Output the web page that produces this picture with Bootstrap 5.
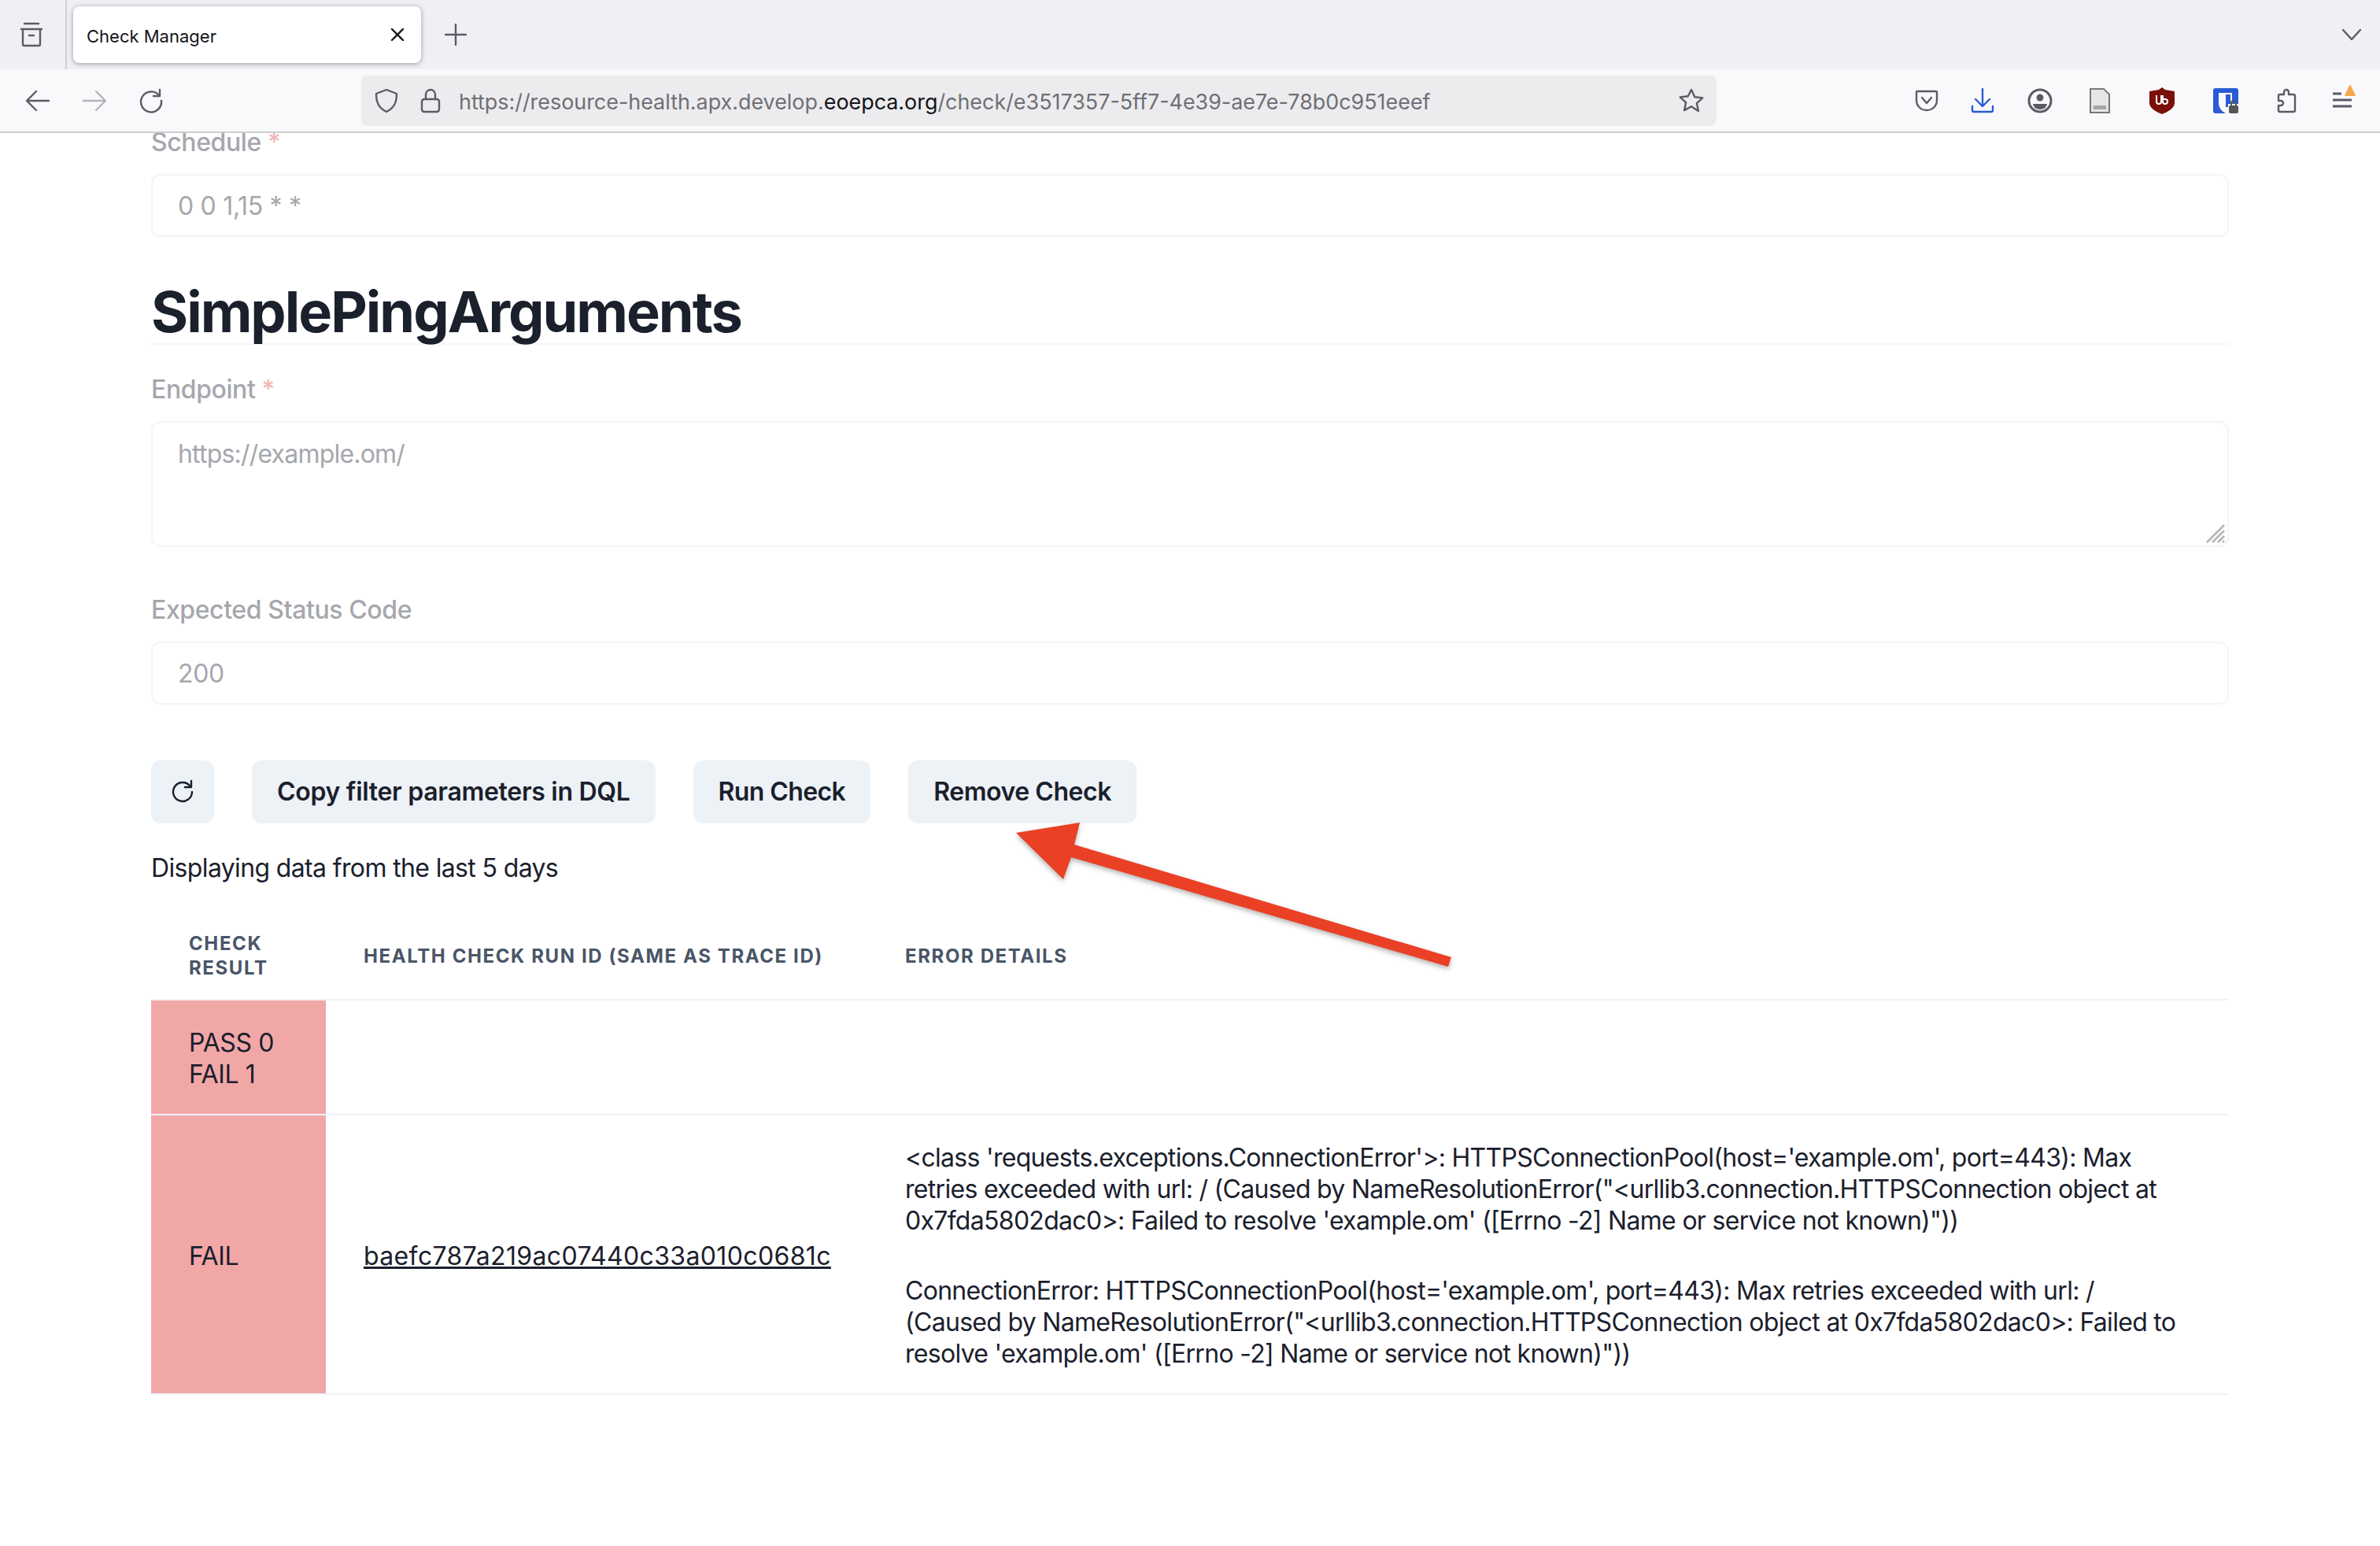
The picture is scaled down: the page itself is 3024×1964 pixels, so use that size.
<!DOCTYPE html>
<html lang="en">
<head>
  <meta charset="UTF-8">
  <title>Check Manager</title>
  <link href="https://cdn.jsdelivr.net/npm/bootstrap@5.3.0/dist/css/bootstrap.min.css" rel="stylesheet">
  <style>
    html, body { height: 100%; }
    body { font-family: Inter, "Liberation Sans", sans-serif; color: #1a202c; background: #fff; overflow: hidden; font-size: 32px; }
    svg { display: block; flex: none; }
    .ic { fill: none; stroke: #5b5b66; stroke-width: 2.4; stroke-linecap: round; stroke-linejoin: round; }

    /* browser chrome */
    .tab-strip { height: 88px; background: #f0f0f4; }
    .side-btn { width: 85px; padding-left: 24px; border-right: 2px solid #cfcfd6; }
    .tab-item { width: 442px; height: 72px; margin-left: 8px; padding: 0 20px 0 17px; background: #fff; border-radius: 8px; box-shadow: 0 1px 6px rgba(0,0,0,.35); font-size: 22px; color: #15141a; }
    .tab-item span { padding-top: 4px; }
    .new-tab { margin-left: 30px; }
    .all-tabs { margin-right: 24px; }
    .tool-strip { height: 81px; background: #f9f9fb; border-bottom: 2px solid #cfcfd3; padding-left: 32px; }
    .nav-gap { margin-left: 40px; }
    .url-bar { width: 1722px; height: 64px; margin-left: 251px; padding: 0 16px; background: #ececee; border-radius: 8px; }
    .url-text { margin-left: 20px; padding-top: 3px; font-size: 26.9px; color: #6f6f76; white-space: nowrap; }
    .url-text b { font-weight: 400; color: #15141a; }
    .url-star { margin-left: auto; }
    .tools { margin-left: 251px; }
    .tools svg:nth-child(2) { margin-left: 39px; }
    .tools svg:nth-child(3) { margin-left: 41px; }
    .tools svg:nth-child(4) { margin-left: 44px; }
    .tools svg:nth-child(5) { margin-left: 47px; }
    .tools svg:nth-child(6) { margin-left: 49px; }
    .tools svg:nth-child(7) { margin-left: 45px; }
    .tools svg:nth-child(8) { margin: -2px 0 0 42px; }

    /* page */
    .page-view { height: 1795px; overflow: hidden; padding: 0 192px; }
    .page-form { margin-top: -12px; }
    .fld-label { display: block; font-size: 32px; line-height: 48px; font-weight: 500; color: #a5a7ad; margin-bottom: 16px; letter-spacing: -0.4px; }
    .fld-label span { color: #f1b6b6; }
    .fld-input.form-control { height: 80px; padding: 0 32px; font-size: 32px; border: 2px solid #f4f4fa; border-radius: 12px; background: #fff; color: #a5a7ad; opacity: 1; box-shadow: none; letter-spacing: -0.3px; }
    .fld-area.form-control { display: block; height: 160px; padding: 16px 32px; font-size: 32px; line-height: 48px; resize: none; letter-spacing: -0.8px; }
    .area-wrap { position: relative; }
    .area-grip { position: absolute; right: 2px; bottom: 2px; }
    .args-title { font-size: 72px; font-weight: 700; line-height: 80px; margin: 55px 0 33px; border-bottom: 2px solid #f4f4fa; letter-spacing: -2px; }
    .act-btn.btn { height: 80px; padding: 0 32px; font-size: 32px; font-weight: 600; color: #1a202c; background: #edf2f7; border: 0; border-radius: 12px; letter-spacing: -0.45px; }
    .act-btn.wide-copy { letter-spacing: -0.3px; }
    .act-btn.short-run { letter-spacing: -0.6px; }
    .act-row { margin-top: 71px; gap: 48px; }
    .icon-btn.btn { width: 80px; padding: 0; }
    .since-note { margin: 33px 0 32px; line-height: 48px; letter-spacing: -0.64px; }

    .check-table.table { table-layout: fixed; margin: 0; color: #1a202c; font-size: 32px; line-height: 40px; }
    .check-table th { padding: 24px 48px; font-size: 24px; line-height: 31px; font-weight: 700; letter-spacing: 1.6px; text-transform: uppercase; color: #4a5568; border-bottom: 2px solid #edf2f7; vertical-align: middle; }
    .check-table td { padding: 34px 48px 30px; border-bottom: 2px solid #edf2f7; vertical-align: middle; }
    .check-table a { color: #1a202c; letter-spacing: 0.36px; }
    .check-table p { margin: 0 0 49px; letter-spacing: -0.7px; }
    .check-table p:last-child { margin: 0; }
    .check-table td.res-fail { background: #f2a7a7; letter-spacing: -0.4px; }
    .col-res { width: 222px; }
    .col-run { width: 688px; }

    .note-arrow { position: absolute; left: 0; top: 0; pointer-events: none; filter: drop-shadow(0 3px 3px rgba(0,0,0,.3)); }
  </style>
</head>
<body>

  <!-- tab strip -->
  <div class="tab-strip d-flex align-items-center">
    <div class="side-btn d-flex align-items-center h-100">
      <svg width="32" height="32" viewBox="0 0 32 32" class="ic"><path d="M3 9h26M5 9v19a2 2 0 0 0 2 2h18a2 2 0 0 0 2-2V9M7 2h18"/><path d="M13 17h6"/></svg>
    </div>
    <div class="tab-item d-flex align-items-center justify-content-between">
      <span>Check Manager</span>
      <svg width="20" height="20" viewBox="0 0 20 20" class="ic" style="stroke:#15141a"><path d="M3 3l14 14M17 3L3 17"/></svg>
    </div>
    <svg width="28" height="28" viewBox="0 0 28 28" class="ic new-tab"><path d="M14 1v26M1 14h26"/></svg>
    <svg width="24" height="16" viewBox="0 0 24 16" class="ic all-tabs ms-auto"><path d="M1 2l11 12L23 2"/></svg>
  </div>

  <!-- toolbar -->
  <div class="tool-strip d-flex align-items-center">
    <svg width="32" height="32" viewBox="0 0 32 32" class="ic"><path d="M30 16H3M14 4L2 16l12 12"/></svg>
    <svg width="32" height="32" viewBox="0 0 32 32" class="ic nav-gap" style="stroke:#b5b5ba"><path d="M2 16h27M18 4l12 12-12 12"/></svg>
    <svg width="32" height="32" viewBox="0 0 32 32" class="ic nav-gap"><path d="M26 9A13 13 0 1 0 29 16"/><path d="M27 2v8h-8" /></svg>

    <div class="url-bar d-flex align-items-center">
      <svg width="32" height="32" viewBox="0 0 32 32" class="ic"><path d="M16 2L3 7c0 11 3 18 13 23 10-5 13-12 13-23z"/></svg>
      <svg width="32" height="32" viewBox="0 0 32 32" class="ic" style="margin-left:24px"><rect x="5" y="14" width="22" height="16" rx="3"/><path d="M10 14V8a6 6 0 0 1 12 0v6"/></svg>
      <span class="url-text">https://resource-health.apx.develop.<b>eoepca.org</b>/check/e3517357-5ff7-4e39-ae7e-78b0c951eeef</span>
      <svg width="32" height="32" viewBox="0 0 32 32" class="ic url-star"><path d="M16 2l4.300 9.200 10 1.200-7.400 6.800 2 9.900L16 23.200 7.100 28.100l2-9.900-7.400-6.800 10-1.200z"/></svg>
    </div>

    <div class="tools d-flex align-items-center">
      <svg width="32" height="32" viewBox="0 0 32 32" class="ic"><path d="M4 4h24a1 1 0 0 1 1 1v10c0 8-6 13-13 13S3 23 3 15V5a1 1 0 0 1 1-1z"/><path d="M10 12l6 7 6-7"/></svg>
      <svg width="32" height="32" viewBox="0 0 32 32" class="ic" style="stroke:#2a5bd7"><path d="M16 1v22M7 14l9 9 9-9"/><path d="M3 23v5a2 2 0 0 0 2 2h22a2 2 0 0 0 2-2v-5"/></svg>
      <svg width="32" height="32" viewBox="0 0 32 32" class="ic"><circle cx="16" cy="16" r="14" stroke-width="3"/><circle cx="16" cy="12" r="4.500" fill="#5b5b66" stroke="none"/><path d="M7 20h18c-1 5-5 7-9 7s-8-2-9-7z" fill="#5b5b66" stroke="none"/></svg>
      <svg width="32" height="32" viewBox="0 0 32 32"><path d="M4 1h17l7 7v23H4z" fill="#e6e6e6" stroke="#77777b" stroke-width="2"/><path d="M8 22h16v5H8z" fill="#a5a5a8"/></svg>
      <svg width="32" height="34" viewBox="0 0 32 34"><path d="M16 0l4 3 12 2v15c0 6-8 11-16 14C8 31 0 26 0 20V5l12-2z" fill="#7a1008"/><path d="M9 10v8a3 3 0 0 0 6 0v-8M17 10v8a3 3 0 1 0 3-3h-3" fill="none" stroke="#fff" stroke-width="2"/></svg>
      <svg width="32" height="32" viewBox="0 0 32 32"><rect width="32" height="32" rx="3" fill="#2a5bd7"/><path d="M7 6h17v26H16c-6-3-9-8-9-13z" fill="#f9f9fb"/><path d="M16 8h6v16h-6z" fill="#2a5bd7"/><path d="M19 20h13v12H19z" fill="#f9f9fb"/><rect x="20" y="22" width="12" height="10" rx="2" fill="#55555a"/><path d="M23 22v-3a3 3 0 0 1 6 0v3" fill="none" stroke="#55555a" stroke-width="2"/></svg>
      <svg width="32" height="32" viewBox="0 0 32 32" class="ic"><path d="M13 8V5a3 3 0 0 1 6 0v3h6a2 2 0 0 1 2 2v18a2 2 0 0 1-2 2H8a2 2 0 0 1-2-2v-6h3a3 3 0 0 0 0-6H6v-6a2 2 0 0 1 2-2z"/></svg>
      <svg width="32" height="40" viewBox="0 0 32 40"><path d="M1 12h11M1 20h24M1 28h24" stroke="#5b5b66" stroke-width="3" fill="none"/><path d="M23 0l6 12 1 3H16l1-3z" fill="#f6a74b"/></svg>
    </div>
  </div>

  <!-- page content -->
  <div class="page-view">
    <div class="page-form">
      <label class="fld-label">Schedule <span>*</span></label>
      <input class="form-control fld-input" value="0 0 1,15 * *" disabled>

      <h2 class="args-title">SimplePingArguments</h2>

      <label class="fld-label">Endpoint <span>*</span></label>
      <div class="area-wrap">
        <textarea class="form-control fld-input fld-area" disabled>https://example.om/</textarea>
        <svg class="area-grip" width="30" height="30" viewBox="0 0 30 30" stroke="#b5b5b5" stroke-width="2.500"><path d="M4 26L26 4M11 26L26 11M18 26l8-8M24 26l2-2"/></svg>
      </div>

      <label class="fld-label" style="margin-top:56px">Expected Status Code</label>
      <input class="form-control fld-input" value="200" disabled>
    </div>

    <div class="act-row d-flex">
      <button class="btn act-btn icon-btn d-flex align-items-center justify-content-center">
        <svg width="32" height="32" viewBox="0 0 32 32" class="ic" style="stroke:#1a202c"><path d="M25 8A12 12 0 1 0 28 16"/><path d="M27 2v8h-8" /></svg>
      </button>
      <button class="btn act-btn wide-copy">Copy filter parameters in DQL</button>
      <button class="btn act-btn short-run">Run Check</button>
      <button class="btn act-btn">Remove Check</button>
    </div>

    <p class="since-note">Displaying data from the last 5 days</p>

    <table class="table check-table">
      <colgroup>
        <col class="col-res"><col class="col-run"><col>
      </colgroup>
      <thead>
        <tr>
          <th>Check Result</th>
          <th>Health Check Run Id (same as Trace ID)</th>
          <th>Error Details</th>
        </tr>
      </thead>
      <tbody>
        <tr>
          <td class="res-fail">PASS 0<br>FAIL 1</td>
          <td></td>
          <td></td>
        </tr>
        <tr>
          <td class="res-fail">FAIL</td>
          <td><a href="#">baefc787a219ac07440c33a010c0681c</a></td>
          <td>
            <p>&lt;class 'requests.exceptions.ConnectionError'&gt;: HTTPSConnectionPool(host='example.om', port=443): Max retries exceeded with url: / (Caused by NameResolutionError("&lt;urllib3.connection.HTTPSConnection object at 0x7fda5802dac0&gt;: Failed to resolve 'example.om' ([Errno -2] Name or service not known)"))</p>
            <p>ConnectionError: HTTPSConnectionPool(host='example.om', port=443): Max retries exceeded with url: / (Caused by NameResolutionError("&lt;urllib3.connection.HTTPSConnection object at 0x7fda5802dac0&gt;: Failed to resolve 'example.om' ([Errno -2] Name or service not known)"))</p>
          </td>
        </tr>
      </tbody>
    </table>
  </div>

  <!-- annotation drawn over the screenshot -->
  <svg class="note-arrow" width="3024" height="1964" viewBox="0 0 3024 1964"><polygon points="1291,1058 1372,1045 1365,1073 1844,1216 1840,1228 1361,1089 1351,1117" fill="#ea4025"/></svg>

  <script src="https://cdn.jsdelivr.net/npm/bootstrap@5.3.0/dist/js/bootstrap.bundle.min.js"></script>
</body>
</html>
